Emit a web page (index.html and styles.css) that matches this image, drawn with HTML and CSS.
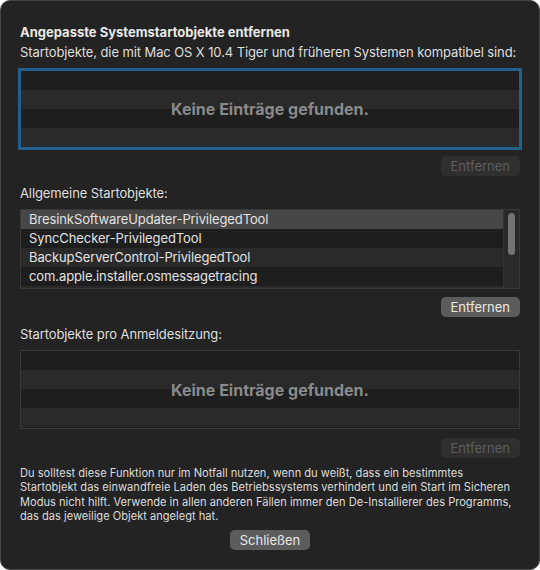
FILE: index.html
```html
<!doctype html>
<html>
<head>
<meta charset="utf-8">
<title>Startobjekte entfernen</title>
<link rel="stylesheet" href="styles.css">
</head>
<body>
<div class="sheet">
	<h1 class="title">Angepasste Systemstartobjekte entfernen</h1>
	<p class="label">Startobjekte, die mit Mac OS X 10.4 Tiger und früheren Systemen kompatibel sind:</p>
	<div class="table focus">
		<div class="rows">
			<div class="row"></div>
			<div class="row"></div>
			<div class="row"></div>
			<div class="row"></div>
		</div>
		<div class="empty">Keine Einträge gefunden.</div>
	</div>
	<div class="actions"><button class="btn" disabled>Entfernen</button></div>

	<p class="label">Allgemeine Startobjekte:</p>
	<div class="table list">
		<div class="rows">
			<div class="row sel">BresinkSoftwareUpdater-PrivilegedTool</div>
			<div class="row">SyncChecker-PrivilegedTool</div>
			<div class="row">BackupServerControl-PrivilegedTool</div>
			<div class="row">com.apple.installer.osmessagetracing</div>
			<div class="row"></div>
		</div>
		<div class="scroller"><div class="thumb"></div></div>
	</div>
	<div class="actions"><button class="btn">Entfernen</button></div>

	<p class="label">Startobjekte pro Anmeldesitzung:</p>
	<div class="table">
		<div class="rows">
			<div class="row"></div>
			<div class="row"></div>
			<div class="row"></div>
			<div class="row"></div>
		</div>
		<div class="empty">Keine Einträge gefunden.</div>
	</div>
	<div class="actions low"><button class="btn" disabled>Entfernen</button></div>

	<p class="note">Du solltest diese Funktion nur im Notfall nutzen, wenn du weißt, dass ein bestimmtes Startobjekt das einwandfreie Laden des Betriebssystems verhindert und ein Start im Sicheren Modus nicht hilft. Verwende in allen anderen Fällen immer den De-Installierer des Programms, das das jeweilige Objekt angelegt hat.</p>
	<div class="actions center"><button class="btn">Schließen</button></div>
</div>
</body>
</html>
```

FILE: styles.css
```css
*{margin:0;padding:0;box-sizing:border-box;}
html,body{background:#fff;}
body{font-family:Inter,"Liberation Sans","Noto Sans",sans-serif;color:#dfdfdf;}

.sheet{width:540px;height:570px;background:#232323;border:1px solid #474747;border-radius:10px;
 padding:23px 19px 0 19px;display:flex;flex-direction:column;overflow:hidden;}

.title{font-size:13px;line-height:16px;font-weight:700;color:#e8e8e8;}
.label{font-size:13px;line-height:16px;margin-top:4px;letter-spacing:-0.1px;}
.sheet .label:nth-of-type(2),.sheet .label:nth-of-type(3){margin-top:9px;}

.table{position:relative;display:flex;height:79px;margin-top:8px;border:1px solid #393939;background:#1e1e1e;overflow:hidden;}
.table.focus{height:78px;margin-top:10px;border-color:#225f8c;box-shadow:0 0 0 2px #225f8c;}
.rows{flex:1;display:flex;flex-direction:column;}
.row{height:19px;flex:none;font-size:13px;line-height:19px;padding-left:8px;color:#e2e2e2;letter-spacing:-0.1px;}
.row:nth-child(even){background:#2a2a2a;}
.row.sel{background:#474747;}
.empty{position:absolute;left:0;right:0;top:0;bottom:0;display:flex;align-items:center;justify-content:center;
 font-size:16px;font-weight:700;color:#8a8a8a;}

.list{height:80px;}
.list .row:nth-child(even){background:#1e1e1e;}
.list .row:nth-child(odd){background:#2a2a2a;}
.list .row.sel{background:#474747;}
.scroller{width:16px;flex:none;background:#2a2a2a;border-left:1px solid #333;padding:3px 0 0 4px;}
.thumb{width:7px;height:42px;border-radius:4px;background:#737373;}

.actions{display:flex;justify-content:flex-end;margin-top:8px;}
.actions.low{margin-top:9px;}
.actions.center{justify-content:center;margin-top:7px;}
.btn{font-family:inherit;font-size:13px;line-height:20px;height:20px;padding:0 10px;border:none;border-radius:5px;
 background:#5c5c5c;color:#e8e8e8;min-width:78px;}
.btn:disabled{background:#2f2f2f;color:#5e5e5e;}

.note{font-size:11.1px;line-height:14.3px;margin-top:8px;color:#dcdcdc;}
```
